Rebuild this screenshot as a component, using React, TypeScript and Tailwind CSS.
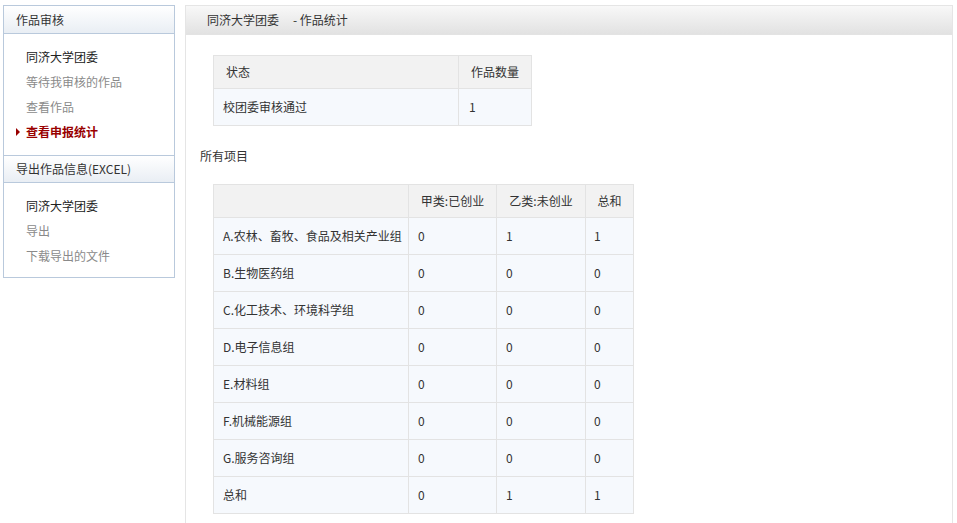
const auditLinks = [
  { label: "同济大学团委", tone: "head" },
  { label: "等待我审核的作品", tone: "muted" },
  { label: "查看作品", tone: "muted" },
  { label: "查看申报统计", tone: "active" },
];

const exportLinks = [
  { label: "同济大学团委", tone: "head" },
  { label: "导出", tone: "muted" },
  { label: "下载导出的文件", tone: "muted" },
];

const groups = [
  { name: "A.农林、畜牧、食品及相关产业组", a: 0, b: 1, sum: 1 },
  { name: "B.生物医药组", a: 0, b: 0, sum: 0 },
  { name: "C.化工技术、环境科学组", a: 0, b: 0, sum: 0 },
  { name: "D.电子信息组", a: 0, b: 0, sum: 0 },
  { name: "E.材料组", a: 0, b: 0, sum: 0 },
  { name: "F.机械能源组", a: 0, b: 0, sum: 0 },
  { name: "G.服务咨询组", a: 0, b: 0, sum: 0 },
  { name: "总和", a: 0, b: 1, sum: 1 },
];

const SideLink = ({ label, tone }: { label: string; tone: string }) => {
  if (tone === "active") {
    return (
      <div className="h-[25px] flex items-center pl-[12px] text-[#990000] font-bold">
        <span className="w-0 h-0 border-y-[4px] border-y-transparent border-l-[4px] border-l-[#990000] mr-[6px]" />
        {label}
      </div>
    );
  }
  return (
    <div
      className={
        "h-[25px] flex items-center pl-[22px] " +
        (tone === "head" ? "text-[#222]" : "text-[#8a8a8a]")
      }
    >
      {label}
    </div>
  );
};

const SideHeader = ({ children, top }: { children: React.ReactNode; top?: boolean }) => (
  <div
    className={
      "h-[28px] flex items-center pl-[12px] text-[#333] bg-gradient-to-b from-white to-[#e9eef4] border-b border-[#b9c9dc] " +
      (top ? "" : "border-t")
    }
  >
    {children}
  </div>
);

export default function App() {
  return (
    <div
      className="min-h-[523px] bg-white text-[12px] text-[#333] flex items-start gap-[10px] pt-[5px] pl-[3px]"
      style={{ fontFamily: '"Microsoft YaHei", "Noto Sans CJK SC", "Liberation Sans", sans-serif' }}
    >
      {/* 左侧菜单 */}
      <aside className="w-[172px] border border-[#b9c9dc]">
        <SideHeader top>作品审核</SideHeader>
        <div className="pt-[10px] pb-[11px]">
          {auditLinks.map((l) => (
            <SideLink key={l.label} {...l} />
          ))}
        </div>
        <SideHeader>导出作品信息(EXCEL)</SideHeader>
        <div className="pt-[10px] pb-[9px]">
          {exportLinks.map((l) => (
            <SideLink key={l.label} {...l} />
          ))}
        </div>
      </aside>

      {/* 主体 */}
      <main className="w-[768px] min-h-[518px] border border-[#e5e5e5] border-b-0">
        <div className="h-[29px] flex items-center pl-[21px] bg-gradient-to-b from-[#f8f8f8] to-[#e2e2e2] border-b border-[#e3e3e3]">
          同济大学团委<span className="ml-[14px]">- 作品统计</span>
        </div>

        <div className="pt-[20px]">
          <table className="ml-[27px] border-collapse">
            <thead>
              <tr className="h-[33px] bg-[#f2f2f2]">
                <th className="w-[245px] border border-[#e3e3e3] font-normal text-left pl-[12px]">状态</th>
                <th className="w-[73px] border border-[#e3e3e3] font-normal text-center">作品数量</th>
              </tr>
            </thead>
            <tbody>
              <tr className="h-[37px] bg-[#f6f9fd]">
                <td className="border border-[#e3e3e3] pl-[9px]">校团委审核通过</td>
                <td className="border border-[#e3e3e3] pl-[10px]">1</td>
              </tr>
            </tbody>
          </table>

          <div className="h-[22px] mt-[19px] pl-[14px] flex items-center">所有项目</div>

          <table className="ml-[27px] mt-[17px] border-collapse">
            <thead>
              <tr className="h-[33px] bg-[#f2f2f2]">
                <th className="w-[195px] border border-[#e3e3e3]" />
                <th className="w-[88px] border border-[#e3e3e3] font-normal text-center">甲类:已创业</th>
                <th className="w-[89px] border border-[#e3e3e3] font-normal text-center">乙类:未创业</th>
                <th className="w-[48px] border border-[#e3e3e3] font-normal text-center">总和</th>
              </tr>
            </thead>
            <tbody>
              {groups.map((g) => (
                <tr key={g.name} className="h-[37px] bg-[#f6f9fd]">
                  <td className="border border-[#e3e3e3] pl-[9px] whitespace-nowrap">{g.name}</td>
                  <td className="border border-[#e3e3e3] pl-[9px]">{g.a}</td>
                  <td className="border border-[#e3e3e3] pl-[9px]">{g.b}</td>
                  <td className="border border-[#e3e3e3] pl-[8px]">{g.sum}</td>
                </tr>
              ))}
            </tbody>
          </table>
        </div>
      </main>
    </div>
  );
}
